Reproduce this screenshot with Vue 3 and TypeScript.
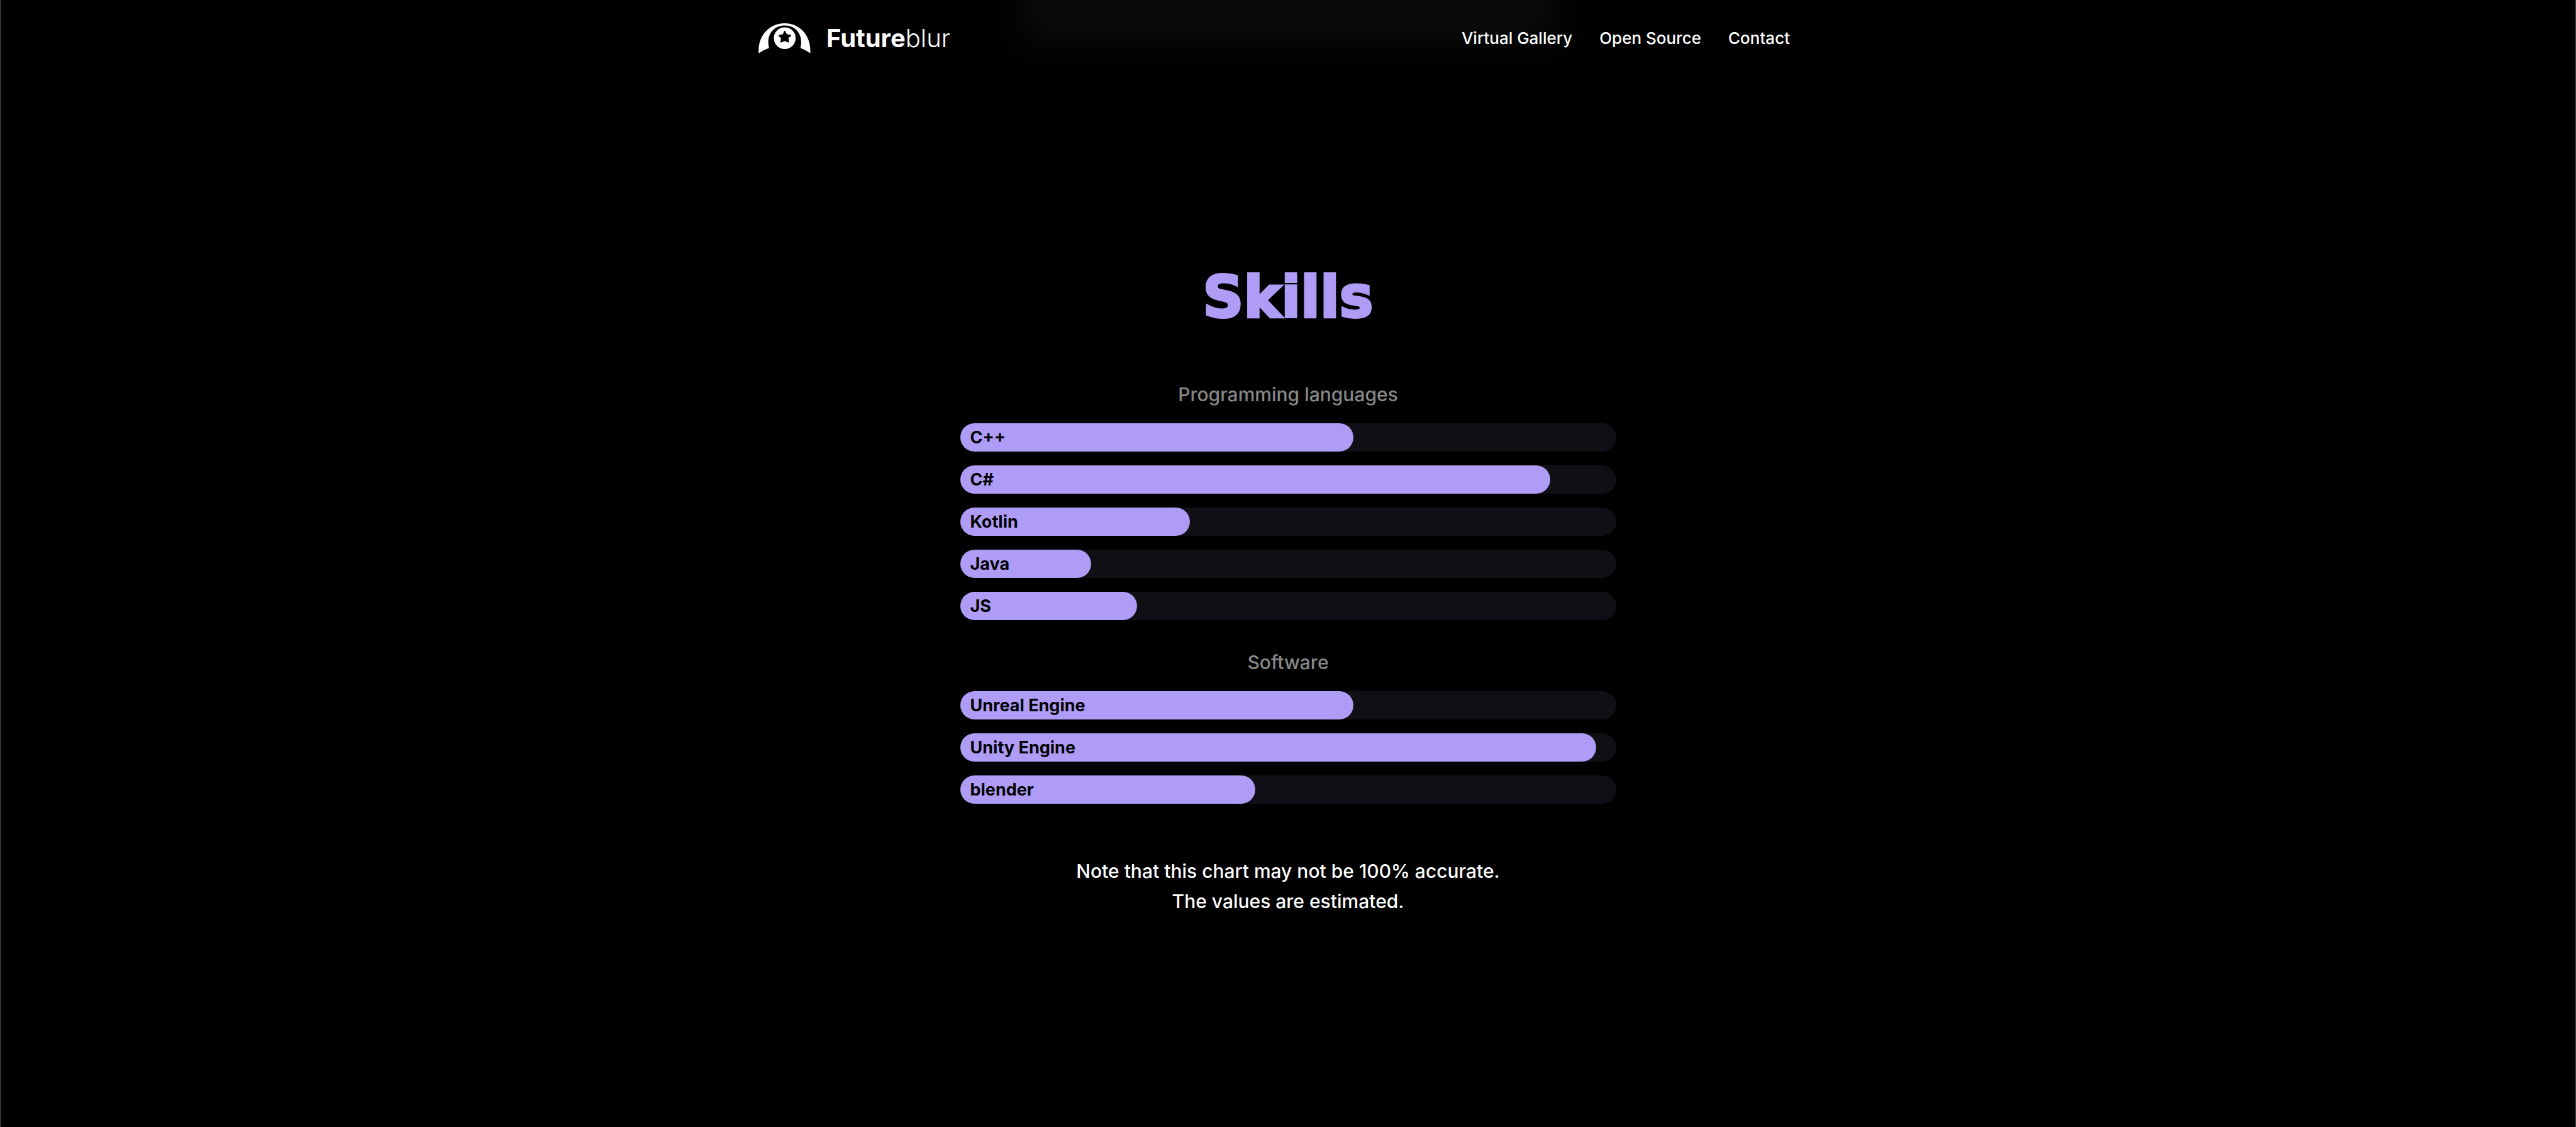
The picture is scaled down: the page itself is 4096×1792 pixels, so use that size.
<script setup lang="ts">
interface Skill {
  name: string
  level: number
}

interface SkillGroup {
  title: string
  skills: Skill[]
}

const links: { label: string; href: string }[] = [
  { label: 'Virtual Gallery', href: '#gallery' },
  { label: 'Open Source', href: '#open-source' },
  { label: 'Contact', href: '#contact' },
]

const groups: SkillGroup[] = [
  {
    title: 'Programming languages',
    skills: [
      { name: 'C++', level: 60 },
      { name: 'C#', level: 90 },
      { name: 'Kotlin', level: 35 },
      { name: 'Java', level: 20 },
      { name: 'JS', level: 27 },
    ],
  },
  {
    title: 'Software',
    skills: [
      { name: 'Unreal Engine', level: 60 },
      { name: 'Unity Engine', level: 97 },
      { name: 'blender', level: 45 },
    ],
  },
]
</script>

<template>
  <div class="page">
    <header class="header">
      <div class="glow" aria-hidden="true"></div>
      <div class="header-inner">
        <a class="brand" href="#home">
          <svg class="mark" viewBox="84 78 310 180" aria-hidden="true">
            <path
              fill="#fff"
              d="M85 257C77 160 142 78 239 78S400 160 392 257Q364 236 333 225C337 214 338 202 338 190C338 128 293 91 240 91S142 128 142 190C142 202 143 214 147 225Q115 236 85 257Z"
            />
            <path
              fill="#fff"
              fill-rule="evenodd"
              d="M240 102a65 65 0 1 0 0 130a65 65 0 1 0 0-130ZM238 123Q241 120 243 124L252 143L276 147Q281 149 277 153L262 167L266 189Q266 194 261 192L240 184L219 192Q214 194 214 189L218 167L204 154Q201 150 206 148L229 143Z"
            />
          </svg>
          <span class="wordmark"><b>Future</b>blur</span>
        </a>
        <nav class="nav">
          <a v-for="link in links" :key="link.label" :href="link.href">{{ link.label }}</a>
        </nav>
      </div>
    </header>

    <main class="skills">
      <h1>Skills</h1>
      <section v-for="group in groups" :key="group.title" class="group">
        <h2>{{ group.title }}</h2>
        <ul>
          <li v-for="skill in group.skills" :key="skill.name">
            <div class="fill" :style="{ width: skill.level + '%' }">{{ skill.name }}</div>
          </li>
        </ul>
      </section>
      <p class="note">
        Note that this chart may not be 100% accurate.<br />
        The values are estimated.
      </p>
    </main>
  </div>
</template>

<style>
body {
  margin: 0;
  background: #000;
}
</style>

<style scoped>
.page {
  box-sizing: border-box;
  min-height: 100vh;
  border: solid #333;
  border-width: 0 2px;
  background: #000;
  color: #fff;
  font-family: Inter, 'Noto Sans', sans-serif;
  font-weight: 500;
}

.header {
  position: relative;
  overflow: hidden;
}

.glow {
  position: absolute;
  top: -60px;
  left: 50%;
  width: 860px;
  height: 132px;
  margin-left: -430px;
  background: #0a0a0a;
  filter: blur(28px);
}

.header-inner {
  position: relative;
  box-sizing: border-box;
  display: flex;
  align-items: center;
  justify-content: space-between;
  width: 100%;
  max-width: 1684px;
  height: 122px;
  margin: 0 auto;
  padding-right: 44px;
}

.brand {
  display: flex;
  align-items: center;
  gap: 25px;
  color: #fff;
  text-decoration: none;
}

.mark {
  width: 83px;
  height: 48px;
}

.wordmark {
  font-size: 40px;
  line-height: 48px;
  font-weight: 300;
}

.wordmark b {
  font-weight: 700;
}

.nav {
  display: flex;
  gap: 43px;
}

.nav a {
  color: #fff;
  font-size: 26px;
  line-height: 40px;
  text-decoration: none;
}

.skills {
  width: 100%;
  max-width: 1043px;
  margin: 0 auto;
  padding-top: 301px;
  text-align: center;
}

h1 {
  margin: 0 0 80px;
  color: #ae9cf6;
  font-family: 'DejaVu Sans', sans-serif;
  font-size: 90px;
  line-height: 100px;
  font-weight: 700;
  -webkit-text-stroke: 4px #ae9cf6;
}

.group + .group {
  margin-top: 43px;
}

h2 {
  margin: 0 0 22px;
  color: #888;
  font-size: 30px;
  line-height: 48px;
  font-weight: 500;
}

ul {
  display: flex;
  flex-direction: column;
  gap: 22px;
  margin: 0;
  padding: 0;
  list-style: none;
}

li {
  border-radius: 23px;
  background: #100f15;
}

.fill {
  box-sizing: border-box;
  height: 45px;
  padding-left: 16px;
  border-radius: 23px;
  background: #ae9cf6;
  color: #000;
  font-size: 27px;
  line-height: 45px;
  font-weight: 700;
  text-align: left;
}

.note {
  margin: 83px 0 0;
  font-size: 30px;
  line-height: 48px;
}
</style>
